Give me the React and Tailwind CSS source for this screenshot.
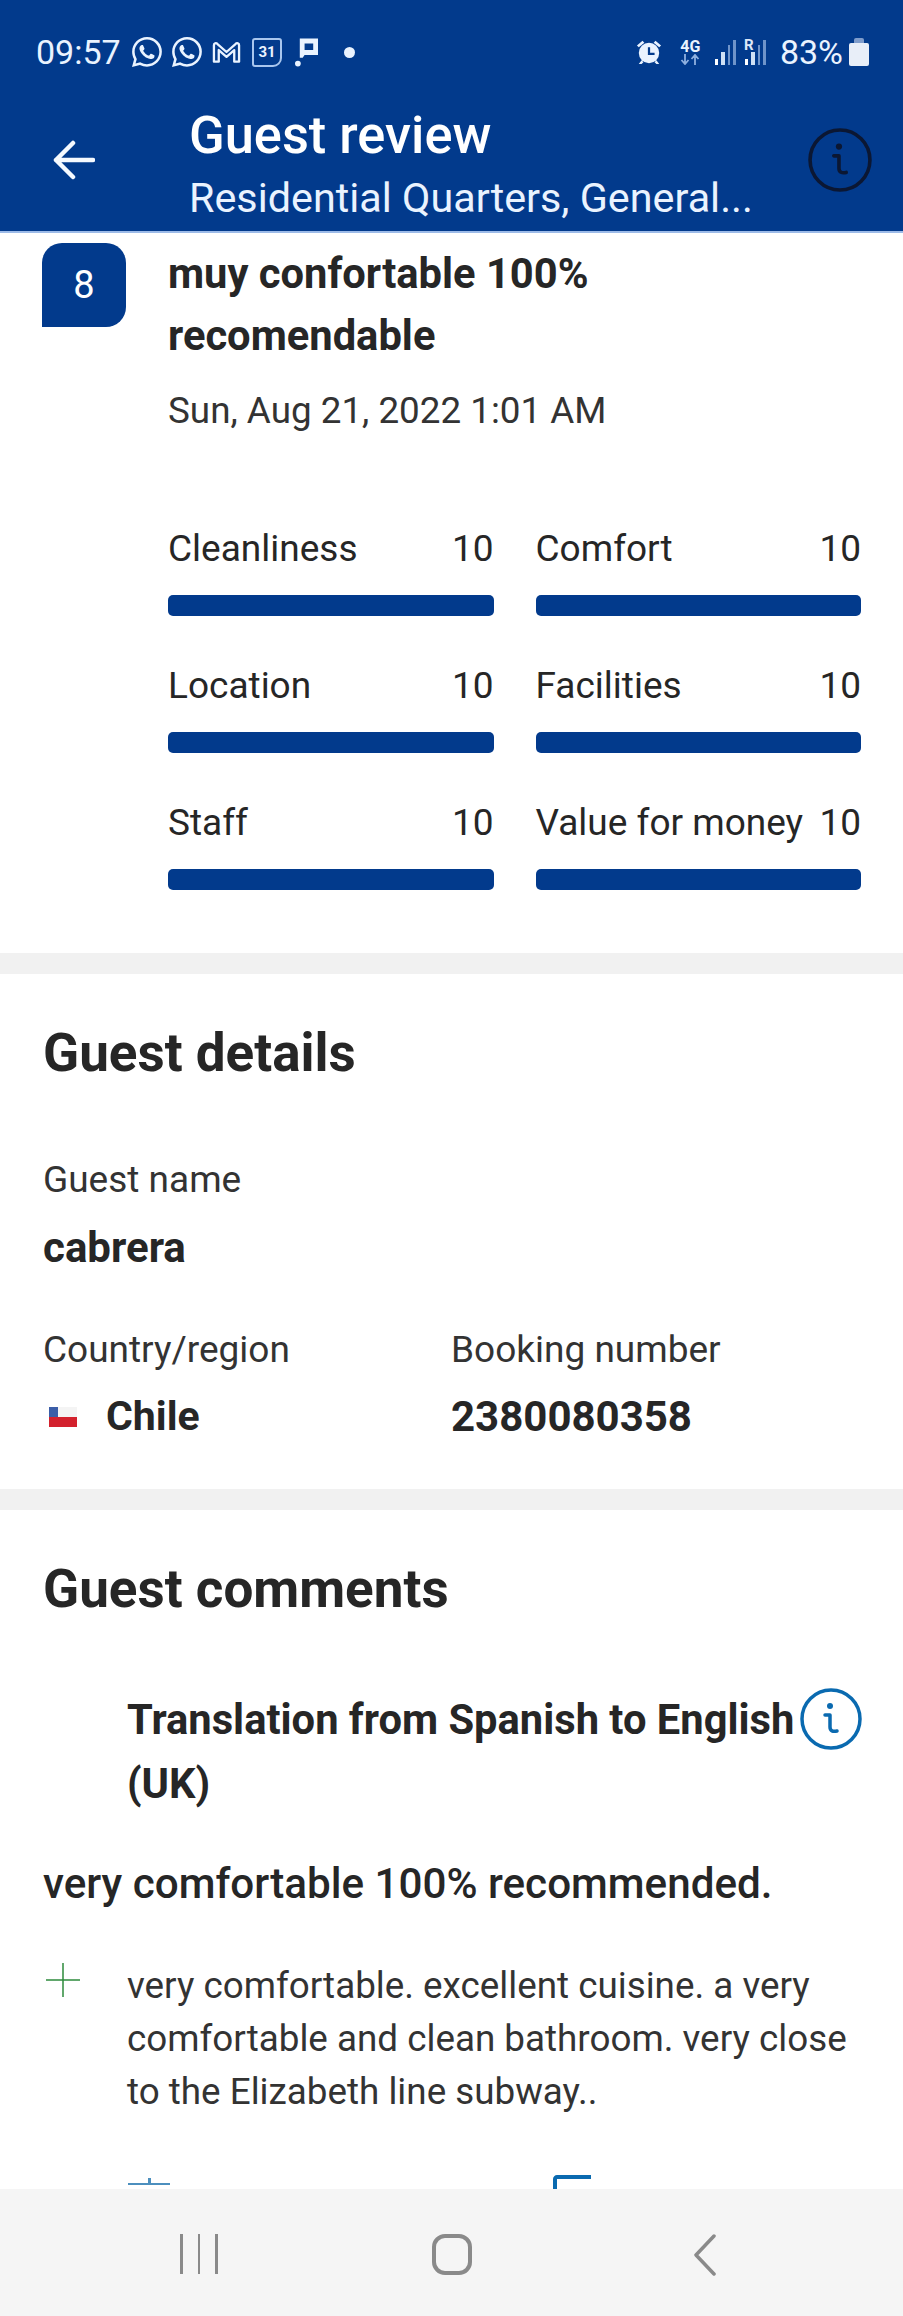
import React from "react";
import { BsWhatsapp } from "react-icons/bs";

const scores = [
  ["Cleanliness", 10],
  ["Comfort", 10],
  ["Location", 10],
  ["Facilities", 10],
  ["Staff", 10],
  ["Value for money", 10],
];

function InfoIcon({ className }) {
  return (
    <svg viewBox="0 0 62 62" fill="none" stroke="currentColor" className={className}>
      <circle cx="31" cy="31" r="29" strokeWidth="3.5" />
      <circle cx="30" cy="18" r="3" fill="currentColor" stroke="none" />
      <path d="M25 27h5v12c0 4 3 5 7 4" strokeWidth="3.5" strokeLinecap="round" strokeLinejoin="round" />
    </svg>
  );
}

function Signal({ hasR }) {
  return (
    <div className="relative flex items-end gap-[3px] h-[25px]">
      {hasR && <span className="absolute left-[-1px] top-[-2px] text-[15px] leading-none font-bold text-[#dce8f8]">R</span>}
      <div className="w-[3.5px] h-[6px] bg-white" />
      <div className="w-[3.5px] h-[13px] bg-[#cfe0f5]" />
      <div className="w-[2.5px] h-[20px] bg-[#6f94ca]" />
      <div className="w-[2.5px] h-[25px] bg-[#6f94ca]" />
    </div>
  );
}

function StatusBar() {
  return (
    <div className="flex items-center justify-between h-[40px] pl-[36px] pr-[34px] text-[#eaf3ff]">
      <div className="flex items-center">
        <span className="text-[34px] leading-none w-[96px]">09:57</span>
        <BsWhatsapp className="w-[30px] h-[30px]" />
        <BsWhatsapp className="w-[30px] h-[30px] ml-[10px]" />
        <svg viewBox="0 0 30 24" fill="none" stroke="currentColor" strokeWidth="2.4" strokeLinejoin="round" className="w-[29px] h-[24px] ml-[10px]">
          <path d="M2 22V5c0-2 2-3 4-1l9 8 9-8c2-2 4-1 4 1v17h-5V10l-8 7-8-7v12z" />
        </svg>
        <div className="w-[30px] h-[29px] ml-[11px] border-[2.5px] border-[#a9c6ee] rounded-[3px] rounded-br-[9px] flex items-center justify-center text-[15px] font-bold leading-none">31</div>
        <svg viewBox="0 0 24 30" className="w-[23px] h-[30px] ml-[13px]" fill="currentColor">
          <path fillRule="evenodd" d="M5 1h19v17H10l-2 3H5zM10 6v7h9V6z" />
          <circle cx="3" cy="27" r="3" />
        </svg>
        <div className="w-[11px] h-[11px] rounded-full bg-current ml-[26px]" />
      </div>
      <div className="flex items-center">
        <svg viewBox="0 0 28 28" className="w-[26px] h-[26px]" fill="currentColor">
          <circle cx="14" cy="15" r="11" />
          <path d="M1 7l6-5 2 2-6 5zM27 7l-6-5-2 2 6 5zM6 23l-3 4h3l2-2zM22 23l3 4h-3l-2-2z" />
          <path d="M14 9v7h6" fill="none" stroke="#023a8c" strokeWidth="2.4" />
        </svg>
        <div className="ml-[18px] w-[21px] flex flex-col items-center">
          <span className="text-[16px] leading-[15px] font-bold">4G</span>
          <svg viewBox="0 0 21 11" fill="none" stroke="#8fb0df" strokeWidth="1.8" className="w-[21px] h-[11px]">
            <path d="M5 0v9M1.500 6l3.500 4 3.500-4M15 11V2M11.500 5L15 1l3.500 4" />
          </svg>
        </div>
        <div className="ml-[14px]"><Signal /></div>
        <div className="ml-[9px]"><Signal hasR /></div>
        <span className="text-[34px] leading-none ml-[14px]">83%</span>
        <div className="relative ml-[6px] w-[20px] h-[23px] mt-[5px] bg-[#e8eef8] rounded-[2px]">
          <div className="absolute top-[-5px] left-[5px] w-[10px] h-[5px] bg-[#7f9ccb] rounded-t-[2px]" />
        </div>
      </div>
    </div>
  );
}

function Header() {
  return (
    <header className="h-[233px] shrink-0 bg-[#023a8c] pt-[32px] border-b-[2px] border-[#9dbbe8]">
      <StatusBar />
      <div className="flex items-start pl-[53px] pr-[31px] mt-[33px]">
        <svg viewBox="0 0 42 40" fill="none" stroke="#f5f9ff" strokeWidth="4.5" strokeLinecap="round" strokeLinejoin="round" className="w-[42px] h-[40px] mt-[35px] shrink-0">
          <path d="M40 20H3M20 3L3 20l17 17" />
        </svg>
        <div className="ml-[94px] flex-1 min-w-0">
          <h1 className="text-[52.400px] leading-[60px] font-medium text-white">Guest review</h1>
          <p className="text-[41.300px] leading-[50px] mt-[8px] text-[#eaf3ff] whitespace-nowrap">Residential Quarters, General...</p>
        </div>
        <InfoIcon className="w-[64px] h-[64px] mt-[23px] shrink-0 text-[#0b1733]" />
      </div>
    </header>
  );
}

function ScoreCell({ label, value }) {
  return (
    <div>
      <div className="flex justify-between text-[37px] leading-[44px] text-[#262626]">
        <span>{label}</span>
        <span>{value}</span>
      </div>
      <div className="mt-[24px] h-[21px] rounded-[5px] bg-[#023a8c]" />
    </div>
  );
}

function Divider() {
  return <div className="h-[21px] bg-[#f1f1f1]" />;
}

function Review() {
  return (
    <section className="pt-[10px] pl-[42px] pr-[42px] pb-[63px]">
      <div className="flex">
        <div className="w-[84px] h-[84px] shrink-0 bg-[#023a8c] rounded-[20px] rounded-bl-none flex items-center justify-center text-[38px] text-white">8</div>
        <div className="ml-[42px]">
          <h2 className="text-[41.700px] leading-[62px] font-bold text-[#262626]">
            muy confortable 100%<br />recomendable
          </h2>
          <p className="text-[36.800px] leading-[50px] mt-[19px] text-[#333]">Sun, Aug 21, 2022 1:01 AM</p>
        </div>
      </div>
      <div className="mt-[91px] ml-[126px] grid grid-cols-2 gap-x-[42px] gap-y-[48px]">
        {scores.map(([label, value]) => (
          <ScoreCell key={label} label={label} value={value} />
        ))}
      </div>
    </section>
  );
}

function GuestDetails() {
  return (
    <section className="h-[515px] pl-[43px] pt-[49px]">
      <h2 className="text-[53px] leading-[60px] font-bold text-[#262626]">Guest details</h2>
      <p className="text-[37px] leading-[44px] mt-[75px] text-[#333]">Guest name</p>
      <p className="text-[42px] leading-[50px] mt-[21px] font-bold text-[#262626]">cabrera</p>
      <div className="grid grid-cols-[408px_1fr] mt-[55px]">
        <div>
          <p className="text-[37px] leading-[44px] text-[#333]">Country/region</p>
          <div className="flex items-center mt-[20px] h-[50px]">
            <div className="relative w-[28px] h-[20px] ml-[6px] flex flex-col">
              <div className="flex-1 bg-[#f4f4f4]" />
              <div className="flex-1 bg-[#d3212d]" />
              <div className="absolute left-0 top-0 w-[9px] h-[10px] bg-[#3b5ea8]" />
            </div>
            <span className="ml-[29px] text-[41px] font-bold text-[#262626]">Chile</span>
          </div>
        </div>
        <div>
          <p className="text-[37px] leading-[44px] text-[#333]">Booking number</p>
          <p className="text-[42px] leading-[50px] mt-[20px] font-bold text-[#262626]">2380080358</p>
        </div>
      </div>
    </section>
  );
}

function GuestComments() {
  return (
    <section className="pl-[43px] pr-[42px] pt-[49px]">
      <h2 className="text-[53px] leading-[60px] font-bold text-[#262626]">Guest comments</h2>
      <div className="flex items-start mt-[69px] pl-[84px]">
        <h3 className="text-[41.700px] leading-[64px] font-bold text-[#262626] w-[672px] shrink-0 whitespace-nowrap">
          Translation from Spanish to English<br />(UK)
        </h3>
        <InfoIcon className="w-[62px] h-[62px] shrink-0 ml-[1px] text-[#0a6ab0]" />
      </div>
      <p className="text-[42.200px] leading-[56px] font-medium mt-[40px] text-[#262626] whitespace-nowrap">very comfortable 100% recommended.</p>
      <div className="flex items-start mt-[47px]">
        <svg viewBox="0 0 34 34" stroke="#2e8b3d" strokeWidth="1.500" className="w-[34px] h-[34px] ml-[3px] mt-[4px] shrink-0">
          <path d="M0 17h34M17 0v34" />
        </svg>
        <p className="ml-[47px] text-[36.800px] leading-[53px] text-[#333]">
          very comfortable. excellent cuisine. a very comfortable and clean bathroom. very close to the Elizabeth line subway..
        </p>
      </div>
      <div className="flex mt-[60px] pl-[85px]">
        <svg viewBox="0 0 42 10" className="w-[42px] h-[10px]" fill="#4c8fbe">
          <rect x="0" y="5" width="42" height="2" />
          <rect x="20" y="0" width="3" height="6" />
        </svg>
        <svg viewBox="0 0 38 16" className="w-[38px] h-[16px] ml-[383px] -mt-[4px]" fill="none" stroke="#0a6ab0" strokeWidth="4">
          <path d="M2 16V5c0-1 1-2 2-2h34" />
        </svg>
      </div>
    </section>
  );
}

function NavBar() {
  return (
    <nav className="h-[127px] shrink-0 bg-[#f5f5f5] flex items-start pt-[45px] pl-[180px]">
      <div className="flex gap-[15px] w-[38px] h-[40px]">
        <div className="w-[3px] h-full bg-[#8a8a8a]" />
        <div className="w-[3px] h-full bg-[#8a8a8a]" />
        <div className="w-[3px] h-full bg-[#8a8a8a]" />
      </div>
      <div className="ml-[214px] w-[40px] h-[41px] rounded-[13px] border-[4px] border-[#8a8a8a]" />
      <svg viewBox="0 0 22 42" fill="none" stroke="#8a8a8a" strokeWidth="3.5" strokeLinecap="round" strokeLinejoin="round" className="ml-[222px] w-[22px] h-[42px]">
        <path d="M20 2L2 21l18 19" />
      </svg>
    </nav>
  );
}

export default function App() {
  return (
    <div className="w-[903px] h-[2316px] flex flex-col bg-white font-['Roboto',sans-serif] overflow-hidden">
      <Header />
      <main className="flex-1 min-h-0 overflow-hidden">
        <Review />
        <Divider />
        <GuestDetails />
        <Divider />
        <GuestComments />
      </main>
      <NavBar />
    </div>
  );
}
